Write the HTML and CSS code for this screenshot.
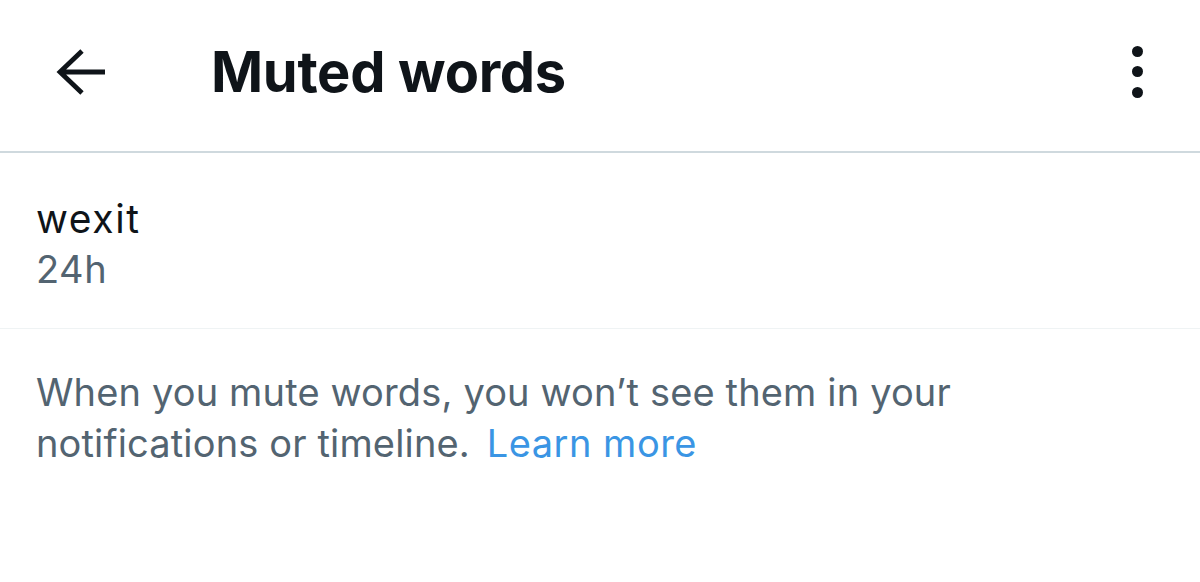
FILE: index.html
```html
<!DOCTYPE html>
<html lang="en">
<head>
<meta charset="utf-8">
<title>Muted words</title>
<link rel="stylesheet" href="styles.css">
</head>
<body>
<div class="screen">
  <header class="topbar">
    <button class="back" aria-label="Back">
      <svg width="52" height="48" viewBox="0 0 52 48" aria-hidden="true">
        <path d="M26 3 L4 24 L26 45 M4 24 H49" fill="none" stroke="#0f1419" stroke-width="4.8" stroke-linejoin="miter" stroke-linecap="butt"/>
      </svg>
    </button>
    <h1 class="title">Muted words</h1>
    <button class="more" aria-label="More">
      <span class="dot"></span><span class="dot"></span><span class="dot"></span>
    </button>
  </header>
  <div class="row">
    <div class="word">wexit</div>
    <div class="duration">24h</div>
  </div>
  <p class="note">When you mute words, you won’t see them in your notifications or timeline. <a href="#" class="link">Learn more</a></p>
</div>
</body>
</html>
```

FILE: styles.css
```css
html, body {
  margin: 0;
  padding: 0;
  background: #ffffff;
}
body {
  font-family: Inter, "Noto Sans", "Liberation Sans", sans-serif;
  color: #0f1419;
}
.screen {
  width: 1200px;
  height: 582px;
  overflow: hidden;
}
.topbar {
  display: flex;
  align-items: center;
  box-sizing: border-box;
  height: 153px;
  padding-bottom: 8px;
  border-bottom: 2px solid #cfd9de;
}
.back {
  border: 0;
  background: none;
  padding: 0;
  margin-left: 56px;
  width: 52px;
  height: 48px;
  display: flex;
}
.title {
  margin: 0 0 0 103px;
  font-size: 56px;
  font-weight: 700;
  letter-spacing: -0.3px;
  color: #0f1419;
  flex: 1;
  line-height: 1;
}
.more {
  border: 0;
  background: none;
  padding: 0;
  margin-right: 57px;
  display: flex;
  flex-direction: column;
  align-items: center;
  gap: 9.5px;
}
.dot {
  width: 11px;
  height: 11px;
  border-radius: 50%;
  background: #0f1419;
}
.row {
  padding: 40px 36px 0;
  height: 176px;
  box-sizing: border-box;
  border-bottom: 1px solid #eff3f4;
}
.word {
  font-size: 39px;
  line-height: 51px;
  color: #0f1419;
  letter-spacing: 1.6px;
}
.duration {
  font-size: 38px;
  line-height: 51px;
  color: #536471;
  letter-spacing: 0.5px;
}
.note {
  margin: 0;
  padding: 38px 36px 0;
  font-size: 38px;
  line-height: 51px;
  color: #536471;
  width: 960px;
  letter-spacing: 0.15px;
}
.link {
  margin-left: 6px;
  letter-spacing: 0.5px;
  color: #3a95e4;
  text-decoration: none;
}
```
